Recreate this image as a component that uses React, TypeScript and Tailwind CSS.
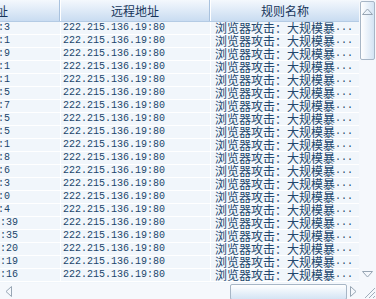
import React from "react";

const firstCol = [":3", ":1", ":9", ":1", ":1", ":5", ":7", ":5", ":5", ":1", ":8", ":6", ":3", ":0", ":4", ":39", ":35", ":20", ":19", ":16"];

const mono = { fontFamily: '"Liberation Mono", "DejaVu Sans Mono", monospace' };
const cjk = { fontFamily: '"Noto Sans CJK SC", "Noto Sans", sans-serif' };

export default function App() {
  return (
    <div className="w-[376px] h-[299px] bg-[#f3f7fb] flex flex-col overflow-hidden select-none">
      <div className="flex h-[283px]">
        {/* list */}
        <div className="w-[359px] flex flex-col overflow-hidden bg-[#f1f6fb]">
          {/* header */}
          <div className="h-[22px] shrink-0 flex bg-gradient-to-b from-[#f4f8fd] to-[#c9dcf1] border-b border-[#b4cbe4] text-[12px] text-[#17355a]" style={cjk}>
            <div className="w-[60px] shrink-0 flex items-center border-r border-[#a9c2de]">
              <span className="ml-[-4px] leading-none">址</span>
            </div>
            <div className="w-[150px] shrink-0 flex items-center justify-center border-r border-[#a9c2de] border-l border-l-white">
              <span className="leading-none">远程地址</span>
            </div>
            <div className="flex-1 flex items-center justify-center border-l border-l-white">
              <span className="leading-none">规则名称</span>
            </div>
          </div>
          {/* rows */}
          {firstCol.map((c, i) => (
            <div key={i} className="h-[13px] shrink-0 flex border-b border-white text-[#22466c]">
              <div className="w-[61px] shrink-0 flex items-center border-r border-white">
                <span className={(c.length > 2 ? "ml-[0px]" : "ml-[-2px]") + " text-[10px] leading-none"} style={mono}>{c}</span>
              </div>
              <div className="w-[150px] shrink-0 flex items-center border-r border-white pl-[2px]">
                <span className="text-[10px] leading-none" style={mono}>222.215.136.19:80</span>
              </div>
              <div className="flex-1 flex items-center pl-[4px] whitespace-nowrap">
                <span className="text-[12px] leading-none" style={cjk}>浏览器攻击：大规模暴</span>
                <span className="text-[10px] leading-none" style={mono}>...</span>
              </div>
            </div>
          ))}
        </div>
        {/* vertical scrollbar */}
        <div className="w-[17px] flex flex-col bg-[#f5f8fc]">
          <div className="mt-[1px] mx-[1px] h-[59px] rounded-[2px] border border-[#a7b6c6] bg-gradient-to-r from-white to-[#d4e4f4] flex justify-center pt-[6px]">
            <svg width="11" height="7" viewBox="0 0 11 7">
              <path d="M0.5 6.5 L5.5 1 L10.5 6.5 Z" fill="none" stroke="#98a6b4" strokeWidth="1" />
            </svg>
          </div>
          <div className="flex-1" />
          <div className="h-[17px] flex justify-center items-start pt-[5px]">
            <svg width="11" height="7" viewBox="0 0 11 7">
              <path d="M0.5 0.5 L5.5 6 L10.5 0.5 Z" fill="none" stroke="#98a6b4" strokeWidth="1" />
            </svg>
          </div>
        </div>
      </div>
      {/* bottom */}
      <div className="flex h-[16px]">
        <div className="w-[359px] flex items-center bg-[#f5f8fc]">
          <div className="w-[17px] flex justify-center">
            <svg width="7" height="11" viewBox="0 0 7 11">
              <path d="M6.5 0.5 L1 5.5 L6.5 10.5 Z" fill="none" stroke="#98a6b4" strokeWidth="1" />
            </svg>
          </div>
          <div className="w-[213px]" />
          <div className="w-[117px] h-[16px] mt-[2px] rounded-[2px] border border-[#a7b6c6] bg-gradient-to-b from-white to-[#d4e4f4]" />
          <div className="flex-1 flex justify-center">
            <svg width="7" height="11" viewBox="0 0 7 11">
              <path d="M0.5 0.5 L6 5.5 L0.5 10.5 Z" fill="none" stroke="#98a6b4" strokeWidth="1" />
            </svg>
          </div>
        </div>
        <div className="w-[17px] bg-[#f5f8fc] flex items-end justify-end">
          <svg width="13" height="13" viewBox="0 0 13 13">
            <path d="M12 2 L2 12 M12 6 L6 12 M12 10 L10 12" stroke="#a0aebb" strokeWidth="1" />
          </svg>
        </div>
      </div>
    </div>
  );
}
